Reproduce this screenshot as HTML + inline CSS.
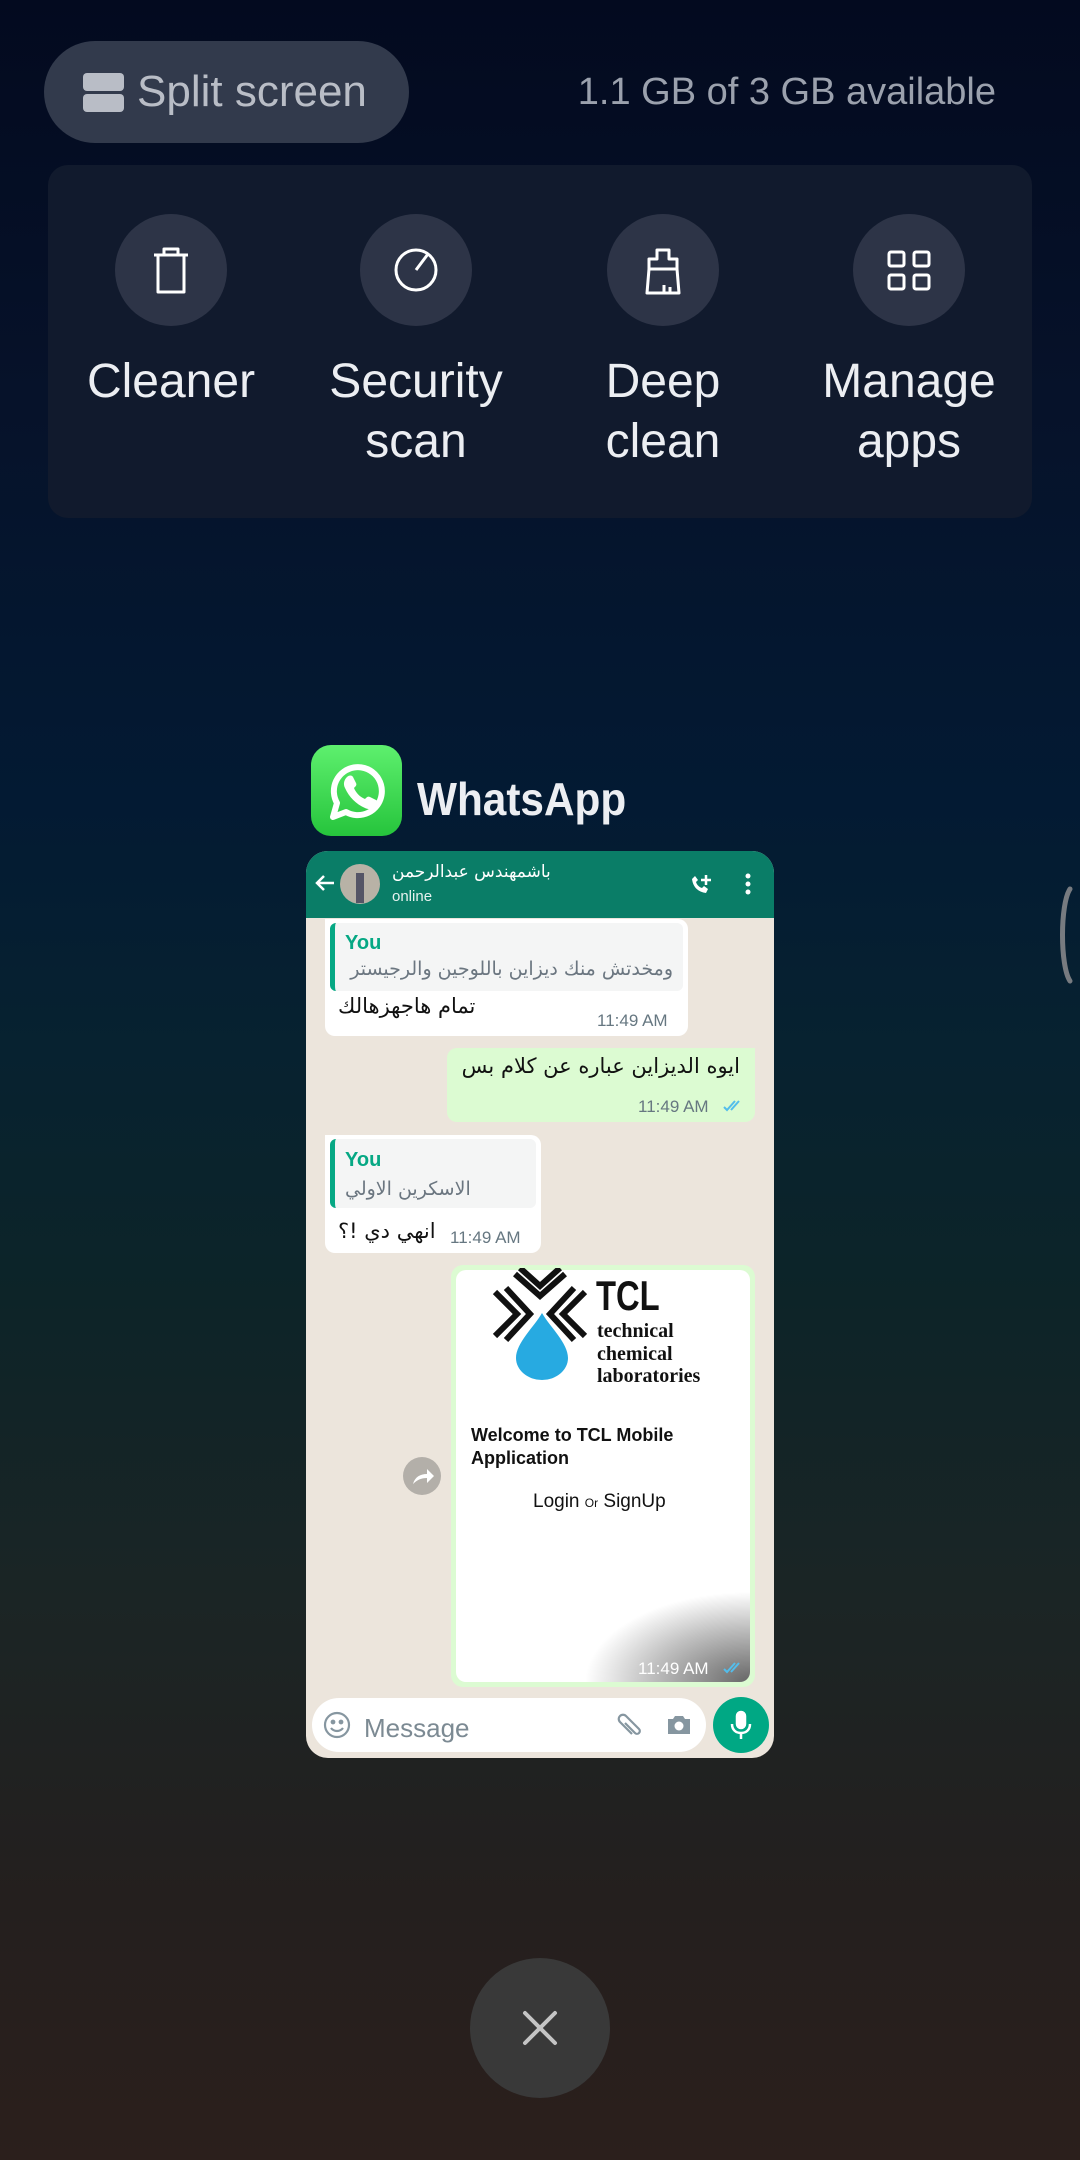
<!DOCTYPE html>
<html><head><meta charset="utf-8"><style>
*{margin:0;padding:0;box-sizing:border-box}
body{width:1080px;height:2160px;overflow:hidden;font-family:"Liberation Sans","DejaVu Sans",sans-serif;
background:linear-gradient(180deg,#030a1f 0px,#06122a 400px,#031a33 800px,#072230 1050px,#0d2428 1300px,#1b2525 1600px,#241f1e 1900px,#2b1f1c 2160px);position:relative}
.a{position:absolute;white-space:nowrap}
.t{line-height:1}
.circ{position:absolute;width:112px;height:112px;border-radius:50%;background:#2d3447}
.lab{position:absolute;width:250px;text-align:center;color:#eceef2;font-size:48px;line-height:60px;top:352px}
.ar{font-family:"DejaVu Sans","Liberation Sans",sans-serif}
</style></head><body>

<div class="a" style="left:44px;top:41px;width:365px;height:102px;border-radius:51px;background:#323a4c"></div>
<div class="a" style="left:83px;top:73px;width:41px;height:18px;border-radius:4px;background:#b9bdc6"></div>
<div class="a" style="left:83px;top:94px;width:41px;height:18px;border-radius:4px;background:#b9bdc6"></div>
<div class="a t" style="left:137px;top:70px;font-size:44px;color:#b9bdc6">Split screen</div>
<div class="a t" style="right:84px;top:73px;font-size:38px;color:#9ba1ad">1.1 GB of 3 GB available</div>

<div class="a" style="left:48px;top:165px;width:984px;height:353px;border-radius:20px;background:#111a2d"></div>
<div class="circ" style="left:115px;top:214px"></div>
<div class="circ" style="left:360px;top:214px"></div>
<div class="circ" style="left:607px;top:214px"></div>
<div class="circ" style="left:853px;top:214px"></div>
<svg class="a" style="left:0;top:0" width="1080" height="400" fill="none" stroke="#fff" stroke-width="3" stroke-linejoin="round">
 <path d="M154 255h34M164 255v-6h14v6M158 255v37h26v-37"/>
 <circle cx="416" cy="270" r="20"/><path d="M416 270l12-16"/>
 <path d="M657 250h12v9h8v10h-28v-10h8z M649 269l-2 24h32l-2-24 M664 293v-8 M670 293v-6"/>
 <rect x="889" y="252" width="15" height="14" rx="2"/><rect x="914" y="252" width="15" height="14" rx="2"/>
 <rect x="889" y="275" width="15" height="14" rx="2"/><rect x="914" y="275" width="15" height="14" rx="2"/>
</svg>
<div class="lab" style="left:46px">Cleaner</div>
<div class="lab" style="left:291px">Security<br>scan</div>
<div class="lab" style="left:538px">Deep<br>clean</div>
<div class="lab" style="left:784px">Manage<br>apps</div>

<div class="a" style="left:311px;top:745px;width:91px;height:91px;border-radius:20px;background:linear-gradient(180deg,#5ef06e,#26c43c)"></div>
<svg class="a" style="left:311px;top:745px" width="91" height="91" viewBox="0 0 91 91">
 <path d="M22 72l4-14a24 24 0 1 1 9 9z" fill="none" stroke="#fff" stroke-width="6" stroke-linejoin="round"/>
 <path d="M36 32c2-2 5-2 6 0l3 6c1 2 0 3-2 5 2 5 6 9 11 11 2-2 3-3 5-2l6 3c2 1 2 4 0 6-3 3-7 4-11 2-9-4-16-11-20-20-2-4-1-8 2-11z" fill="#fff"/>
</svg>
<div class="a t" style="left:417px;top:776px;font-size:46px;font-weight:bold;color:#eceef2;transform:scaleX(0.92);transform-origin:left">WhatsApp</div>

<div class="a" style="left:306px;top:851px;width:468px;height:907px;border-radius:22px;overflow:hidden;background:#ece5dc">
 <div class="a" style="left:0;top:0;width:468px;height:67px;background:#0a7d67"></div>
</div>
<svg class="a" style="left:306px;top:851px" width="468" height="67" fill="none" stroke="#fff" stroke-width="2.5">
 <path d="M28 32h-17M18 25l-7 7 7 7"/>
 <circle cx="54" cy="33" r="20" fill="#b8b2a6" stroke="none"/>
 <path d="M50 22h8v30h-8z" fill="#556" stroke="none"/>
 <path d="M386 28c1 8 6 13 14 14l2-4-4-3-2 2c-3-1-5-3-6-6l2-2-3-4z" fill="#fff" stroke="none"/>
 <path d="M400 24v10M395 29h10"/>
 <circle cx="442" cy="25" r="2.5" fill="#fff" stroke="none"/><circle cx="442" cy="33" r="2.5" fill="#fff" stroke="none"/><circle cx="442" cy="41" r="2.5" fill="#fff" stroke="none"/>
</svg>
<div class="a t ar" style="left:392px;top:864px;font-size:17px;color:#fff">باشمهندس عبدالرحمن</div>
<div class="a t" style="left:392px;top:889px;font-size:15px;color:#e6f2ef">online</div>

<div class="a" style="left:325px;top:919px;width:363px;height:117px;background:#fff;border-radius:0 10px 10px 10px"></div>
<div class="a" style="left:330px;top:923px;width:353px;height:68px;background:#f4f5f5;border-radius:6px;border-left:5px solid #06a884"></div>
<div class="a t" style="left:345px;top:933px;font-size:20px;font-weight:bold;color:#06a884">You</div>
<div class="a t ar" style="right:407px;top:960px;font-size:19px;color:#6b7680">ومخدتش منك ديزاين باللوجين والرجيستر</div>
<div class="a t ar" style="left:338px;top:996px;font-size:21px;color:#111">تمام هاجهزهالك</div>
<div class="a t" style="left:597px;top:1012px;font-size:17px;color:#667781">11:49 AM</div>

<div class="a" style="left:447px;top:1048px;width:308px;height:74px;background:#dcfbd2;border-radius:10px 0 10px 10px"></div>
<div class="a t ar" style="right:340px;top:1056px;font-size:21px;color:#111">ايوه الديزاين عباره عن كلام بس</div>
<div class="a t" style="left:638px;top:1098px;font-size:17px;color:#667781">11:49 AM</div>
<svg class="a" style="left:722px;top:1098px" width="24" height="16" fill="none" stroke="#53bdeb" stroke-width="2"><path d="M2 9l3 3 8-9M9 12l8-9"/></svg>

<div class="a" style="left:325px;top:1135px;width:216px;height:118px;background:#fff;border-radius:0 10px 10px 10px"></div>
<div class="a" style="left:330px;top:1139px;width:206px;height:69px;background:#f4f5f5;border-radius:6px;border-left:5px solid #06a884"></div>
<div class="a t" style="left:345px;top:1150px;font-size:20px;font-weight:bold;color:#06a884">You</div>
<div class="a t ar" style="left:345px;top:1180px;font-size:19px;color:#6b7680">الاسكرين الاولي</div>
<div class="a t ar" style="left:338px;top:1221px;font-size:21px;color:#111">انهي دي !؟</div>
<div class="a t" style="left:450px;top:1229px;font-size:17px;color:#667781">11:49 AM</div>

<div class="a" style="left:451px;top:1265px;width:304px;height:422px;background:#dcfbd2;border-radius:12px"></div>
<div class="a" style="left:456px;top:1270px;width:294px;height:412px;background:#fff;border-radius:10px;overflow:hidden">
 <div class="a" style="right:0;bottom:0;width:220px;height:120px;background:radial-gradient(ellipse 100% 100% at 100% 100%,rgba(0,0,0,0.6),rgba(0,0,0,0.25) 45%,rgba(0,0,0,0) 75%)"></div>
</div>
<svg class="a" style="left:490px;top:1268px" width="100" height="115">
 <g fill="none" stroke="#111" stroke-width="6">
  <path d="M25 6l25 22 25-22M30 0l20 18 20-18"/>
  <path d="M5 24l22 22-22 22M16 20l24 26-24 26"/>
  <path d="M95 24l-22 22 22 22M84 20l-24 26 24 26"/>
 </g>
 <path d="M52 45c-8 14-26 30-26 45a26 22 0 0 0 52 0c0-15-18-31-26-45z" fill="#27aae1"/>
</svg>
<div class="a t" style="left:596px;top:1275px;font-size:42px;font-weight:bold;color:#111;transform:scaleX(0.78);transform-origin:left">TCL</div>
<div class="a" style="left:597px;top:1320px;font-family:'Liberation Serif',serif;font-weight:bold;font-size:20px;line-height:22.5px;color:#111">technical<br>chemical<br>laboratories</div>
<div class="a" style="left:471px;top:1424px;font-size:18px;line-height:23px;font-weight:bold;color:#111">Welcome to TCL Mobile<br>Application</div>
<div class="a t" style="left:533px;top:1492px;font-size:19px;color:#111">Login <span style="font-size:12px">Or</span> SignUp</div>
<div class="a t" style="left:638px;top:1660px;font-size:17px;color:#fff">11:49 AM</div>
<svg class="a" style="left:722px;top:1660px" width="24" height="16" fill="none" stroke="#53bdeb" stroke-width="2"><path d="M2 9l3 3 8-9M9 12l8-9"/></svg>
<div class="a" style="left:403px;top:1457px;width:38px;height:38px;border-radius:50%;background:#b3afa9"></div>
<svg class="a" style="left:403px;top:1457px" width="38" height="38"><path d="M10 27c2-7 7-10 14-10v-5l7 7-7 7v-5c-6 0-10 2-14 6z" fill="#fff"/></svg>

<div class="a" style="left:312px;top:1698px;width:394px;height:54px;border-radius:27px;background:#fff"></div>
<svg class="a" style="left:312px;top:1698px" width="394" height="54" fill="none" stroke="#8696a0" stroke-width="2.2">
 <circle cx="25" cy="27" r="12"/><circle cx="21" cy="24" r="1.3" fill="#8696a0"/><circle cx="29" cy="24" r="1.3" fill="#8696a0"/><path d="M19 30c3 4 9 4 12 0"/>
 <path d="M320 36l-12-12a4 4 0 0 1 6-6l13 13a2.5 2.5 0 0 1-4 4l-10-10"/>
 <path d="M356 21h5l2-3h8l2 3h5v15h-22z" fill="#8696a0" stroke="none"/><circle cx="367" cy="28" r="4.5" fill="#fff" stroke="none"/>
</svg>
<div class="a t" style="left:364px;top:1715px;font-size:26px;color:#7c8a93">Message</div>
<div class="a" style="left:713px;top:1697px;width:56px;height:56px;border-radius:50%;background:#00a884"></div>
<svg class="a" style="left:713px;top:1697px" width="56" height="56" fill="none" stroke="#fff" stroke-width="2.5"><rect x="24" y="15" width="8" height="16" rx="4" fill="#fff"/><path d="M19 27c0 6 4 9 9 9s9-3 9-9M28 36v6"/></svg>

<svg class="a" style="left:1050px;top:885px" width="30" height="100"><path d="M20 4c-10 15-10 77 0 92" fill="none" stroke="#777b80" stroke-width="5" stroke-linecap="round"/></svg>

<div class="a" style="left:470px;top:1958px;width:140px;height:140px;border-radius:50%;background:#393939"></div>
<svg class="a" style="left:470px;top:1958px" width="140" height="140"><path d="M55 55l30 30M85 55l-30 30" stroke="#c4c4c4" stroke-width="4" stroke-linecap="round"/></svg>

</body></html>
